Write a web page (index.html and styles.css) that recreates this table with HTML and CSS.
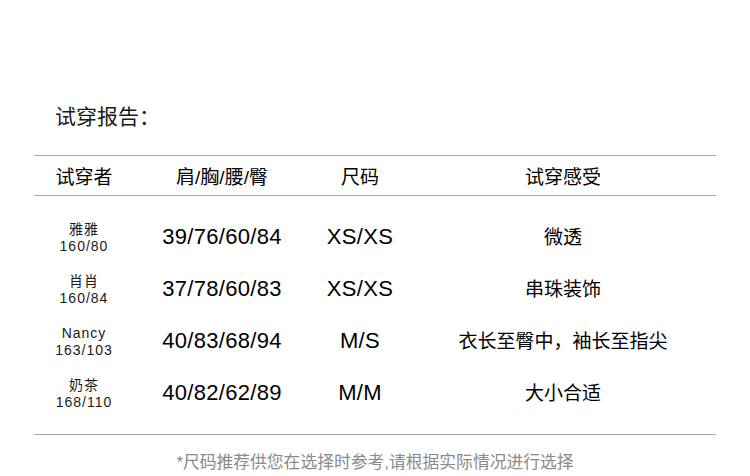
FILE: index.html
```html
<!DOCTYPE html>
<html lang="zh-CN">
<head>
<meta charset="utf-8">
<title>试穿报告</title>
<link rel="stylesheet" href="styles.css">
</head>
<body>
<div class="page">
  <h2 class="title">试穿报告：</h2>
  <div class="report">
    <div class="row head">
      <div class="cell">试穿者</div>
      <div class="cell">肩/胸/腰/臀</div>
      <div class="cell">尺码</div>
      <div class="cell">试穿感受</div>
    </div>
    <div class="body">
      <div class="row">
        <div class="cell name"><span>雅雅</span><span>160/80</span></div>
        <div class="cell num">39/76/60/84</div>
        <div class="cell num">XS/XS</div>
        <div class="cell feel">微透</div>
      </div>
      <div class="row">
        <div class="cell name"><span>肖肖</span><span>160/84</span></div>
        <div class="cell num">37/78/60/83</div>
        <div class="cell num">XS/XS</div>
        <div class="cell feel">串珠装饰</div>
      </div>
      <div class="row">
        <div class="cell name"><span>Nancy</span><span>163/103</span></div>
        <div class="cell num">40/83/68/94</div>
        <div class="cell num">M/S</div>
        <div class="cell feel">衣长至臀中，袖长至指尖</div>
      </div>
      <div class="row">
        <div class="cell name"><span>奶茶</span><span>168/110</span></div>
        <div class="cell num">40/82/62/89</div>
        <div class="cell num">M/M</div>
        <div class="cell feel">大小合适</div>
      </div>
    </div>
  </div>
  <p class="note">*尺码推荐供您在选择时参考,请根据实际情况进行选择</p>
</div>
</body>
</html>
```
FILE: styles.css
```css
html, body {
  margin: 0;
  padding: 0;
  background: #fff;
}
body {
  font-family: "Liberation Sans", "Noto Sans CJK SC", sans-serif;
  color: #000;
}
.page {
  width: 682px;
  padding: 102px 0 0 34px;
}
.title {
  margin: 0 0 23px 21px;
  font-size: 21px;
  line-height: 30px;
  font-weight: normal;
  color: #1a1a1a;
}
.report {
  border-top: 1px solid #a9a9a9;
  border-bottom: 1px solid #a9a9a9;
}
.row {
  display: grid;
  grid-template-columns: 100px 176px 100px 306px;
  align-items: center;
}
.cell {
  text-align: center;
}
.head {
  height: 39px;
  border-bottom: 1px solid #a9a9a9;
  font-size: 19px;
  color: #000;
}
.body {
  padding: 15px 0 15px;
}
.body .row {
  height: 52px;
}
.name {
  display: flex;
  flex-direction: column;
  font-size: 14px;
  line-height: 17px;
  letter-spacing: 1px;
  color: #1a1a1a;
  padding-top: 1px;
}
.num {
  font-size: 22px;
  letter-spacing: 0.3px;
  color: #000;
}
.feel {
  font-size: 19px;
  color: #000;
  padding-bottom: 3px;
}
.note {
  margin: 16px 0 0;
  font-size: 16.8px;
  line-height: 24px;
  text-align: center;
  color: #8a8a8a;
}
```
